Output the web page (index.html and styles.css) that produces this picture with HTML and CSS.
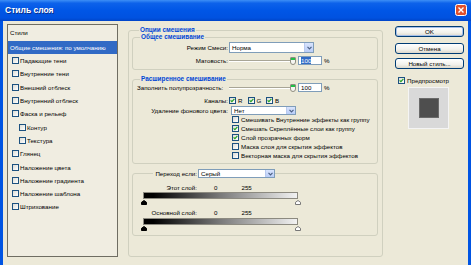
FILE: index.html
```html
<!DOCTYPE html>
<html lang="ru">
<head>
  <meta charset="UTF-8">
  <title>Стиль слоя</title>
  <link rel="stylesheet" href="styles.css">
</head>
<body>
  <div class="window">
    <div class="titlebar">
      <span class="title">Стиль слоя</span>
      <svg class="close" width="12" height="12" viewBox="0 0 12 12">
        <rect x="0.5" y="0.5" width="11" height="11" rx="2" fill="#e0502c" stroke="#fff"/>
        <path d="M3.5 3.5l5 5M8.5 3.5l-5 5" stroke="#fff" stroke-width="1.4"/>
      </svg>
    </div>

    <div class="content">
      <!-- styles list -->
      <div class="styles-list">
        <div class="list-head">Стили</div>
        <div class="item selected">Общие смешения: по умолчанию</div>
        <div class="item"><span class="cb"></span>Падающие тени</div>
        <div class="item"><span class="cb"></span>Внутренние тени</div>
        <div class="item"><span class="cb"></span>Внешний отблеск</div>
        <div class="item"><span class="cb"></span>Внутренний отблеск</div>
        <div class="item"><span class="cb"></span>Фаска и рельеф</div>
        <div class="item sub"><span class="cb"></span>Контур</div>
        <div class="item sub"><span class="cb"></span>Текстура</div>
        <div class="item"><span class="cb"></span>Глянец</div>
        <div class="item"><span class="cb"></span>Наложение цвета</div>
        <div class="item"><span class="cb"></span>Наложение градиента</div>
        <div class="item"><span class="cb"></span>Наложение шаблона</div>
        <div class="item"><span class="cb"></span>Штрихование</div>
      </div>

      <!-- blending options -->
      <fieldset class="options">
        <legend>Опции смешения</legend>

        <fieldset class="group general">
          <legend>Общее смешивание</legend>
          <div class="row first">
            <span class="lbl">Режим Смеси:</span>
            <div class="combo mode">Норма<span class="drop"><svg width="5" height="4" viewBox="0 0 5 4"><path d="M0.5 0.8L2.5 2.8L4.5 0.8" stroke="#4d6185" stroke-width="1.2" fill="none"/></svg></span></div>
          </div>
          <div class="row">
            <span class="lbl">Матовость:</span>
            <div class="slider"><span class="track"></span><span class="thumb"></span></div>
            <span class="num"><span class="hl">100</span></span>
            <span class="pct">%</span>
          </div>
        </fieldset>

        <fieldset class="group advanced">
          <legend>Расширенное смешивание</legend>
          <div class="row">
            <span class="lbl left">Заполнить полупрозрачность:</span>
            <div class="slider"><span class="track"></span><span class="thumb"></span></div>
            <span class="num">100</span>
            <span class="pct">%</span>
          </div>
          <div class="row channels">
            <span class="lbl">Каналы:</span>
            <span class="chan"><span class="cb on"><svg width="5" height="5" viewBox="0 0 5 5"><path d="M0.6 2.4L1.9 3.7L4.4 0.9" stroke="#21a121" stroke-width="1.2" fill="none"/></svg></span>R</span>
            <span class="chan"><span class="cb on"><svg width="5" height="5" viewBox="0 0 5 5"><path d="M0.6 2.4L1.9 3.7L4.4 0.9" stroke="#21a121" stroke-width="1.2" fill="none"/></svg></span>G</span>
            <span class="chan"><span class="cb on"><svg width="5" height="5" viewBox="0 0 5 5"><path d="M0.6 2.4L1.9 3.7L4.4 0.9" stroke="#21a121" stroke-width="1.2" fill="none"/></svg></span>B</span>
          </div>
          <div class="row knockout">
            <span class="lbl">Удаление фонового цвета:</span>
            <div class="combo small">Нет<span class="drop"><svg width="5" height="4" viewBox="0 0 5 4"><path d="M0.5 0.8L2.5 2.8L4.5 0.8" stroke="#4d6185" stroke-width="1.2" fill="none"/></svg></span></div>
          </div>
          <div class="checks">
            <div class="check"><span class="cb"></span>Смешивать Внутренние эффекты как группу</div>
            <div class="check"><span class="cb on"><svg width="5" height="5" viewBox="0 0 5 5"><path d="M0.6 2.4L1.9 3.7L4.4 0.9" stroke="#21a121" stroke-width="1.2" fill="none"/></svg></span>Смешать Скреплённые слои как группу</div>
            <div class="check"><span class="cb on"><svg width="5" height="5" viewBox="0 0 5 5"><path d="M0.6 2.4L1.9 3.7L4.4 0.9" stroke="#21a121" stroke-width="1.2" fill="none"/></svg></span>Слой прозрачных форм</div>
            <div class="check"><span class="cb"></span>Маска слоя для скрытия эффектов</div>
            <div class="check"><span class="cb"></span>Векторная маска для скрытия эффектов</div>
          </div>
        </fieldset>

        <fieldset class="group blendif">
          <legend>
            <span class="if-lbl">Переход если:</span>
            <span class="combo gray">Серый<span class="drop"><svg width="5" height="4" viewBox="0 0 5 4"><path d="M0.5 0.8L2.5 2.8L4.5 0.8" stroke="#4d6185" stroke-width="1.2" fill="none"/></svg></span></span>
          </legend>
          <div class="range-row">
            <span class="rlbl">Этот слой:</span>
            <span class="lo">0</span>
            <span class="hi">255</span>
          </div>
          <div class="ramp"></div>
          <div class="stops">
            <svg width="6" height="5" viewBox="0 0 6 5"><path d="M3 0.5L5.5 2.3V4.5H0.5V2.3Z" fill="#000" stroke="#000"/></svg>
            <svg width="6" height="5" viewBox="0 0 6 5"><path d="M3 0.5L5.5 2.3V4.5H0.5V2.3Z" fill="#fff" stroke="#777"/></svg>
          </div>
          <div class="range-row second">
            <span class="rlbl">Основной слой:</span>
            <span class="lo">0</span>
            <span class="hi">255</span>
          </div>
          <div class="ramp lower"></div>
          <div class="stops">
            <svg width="6" height="5" viewBox="0 0 6 5"><path d="M3 0.5L5.5 2.3V4.5H0.5V2.3Z" fill="#000" stroke="#000"/></svg>
            <svg width="6" height="5" viewBox="0 0 6 5"><path d="M3 0.5L5.5 2.3V4.5H0.5V2.3Z" fill="#fff" stroke="#777"/></svg>
          </div>
        </fieldset>
      </fieldset>

      <!-- buttons and preview -->
      <div class="side">
        <div class="btn default">OK</div>
        <div class="btn cancel">Отмена</div>
        <div class="btn newstyle">Новый стиль...</div>
        <div class="preview-toggle"><span class="cb on"><svg width="5" height="5" viewBox="0 0 5 5"><path d="M0.6 2.4L1.9 3.7L4.4 0.9" stroke="#21a121" stroke-width="1.2" fill="none"/></svg></span>Предпросмотр</div>
        <div class="preview"><div class="swatch"></div></div>
      </div>
    </div>
  </div>
</body>
</html>
```

FILE: styles.css
```css
* {
  box-sizing: border-box;
}

body {
  margin: 0;
  font-family: "Liberation Sans", Arial, sans-serif;
  font-size: 6.2px;
  color: #000;
  background: #fff;
}

.window {
  width: 471px;
  height: 265px;
  background: #0054e3;
  display: flex;
  flex-direction: column;
  overflow: hidden;
}

.titlebar {
  height: 21px;
  flex: none;
  display: flex;
  align-items: center;
  justify-content: space-between;
  padding: 0 4px 1px 5px;
  background: linear-gradient(#3d8ff6 0%, #0d62ea 15%, #0056e6 50%, #0052e0 85%, #0044c8 100%);
}

.title {
  color: #fff;
  font-weight: bold;
  font-size: 8.5px;
  text-shadow: 1px 1px 0 #0a2f8a;
}

.content {
  flex: 1;
  margin: 0 3px;
  background: #ece9d8;
  display: flex;
  align-items: flex-start;
  padding: 3px 0 0 4px;
}

/* left list */
.styles-list {
  width: 111px;
  height: 233px;
  border: 1px solid #6f6d62;
  background: #f0ede1;
  flex: none;
}

.list-head {
  height: 16px;
  line-height: 16px;
  padding-left: 2px;
}

.item {
  height: 13.3px;
  display: flex;
  align-items: center;
  padding-left: 4px;
  white-space: nowrap;
}

.item.selected {
  height: 13px;
  background: #316ac5;
  color: #fff;
  padding-left: 2px;
}

.item.sub {
  padding-left: 11px;
}

.cb {
  width: 7px;
  height: 7px;
  border: 1px solid #1c5180;
  background: linear-gradient(135deg, #dcdcd6, #fff);
  margin-right: 1px;
  flex: none;
  display: inline-flex;
  align-items: center;
  justify-content: center;
}

/* blending options */
fieldset {
  margin: 0;
  padding: 0;
  border: 1px solid #d0d0bf;
  border-radius: 3px;
  min-width: 0;
}

legend {
  padding: 0 1px;
  line-height: 8px;
  color: #0046d5;
  font-weight: bold;
  font-size: 6.4px;
}

.options {
  width: 255px;
  height: 231px;
  margin: 2px 0 0 10px;
  padding: 0 4px 0 3px;
  flex: none;
}

.options > legend {
  margin-left: 7px;
}

.group > legend {
  margin-left: 7px;
}

.general {
  margin-top: -1px;
  padding: 1px 0 4px;
}

.advanced {
  margin-top: 5px;
  padding: 0 0 3px;
}

.row {
  display: flex;
  align-items: center;
  height: 9px;
  white-space: nowrap;
}

.row.first {
  height: 11px;
  margin-bottom: 3px;
}

.lbl {
  width: 95px;
  margin-right: 1px;
  text-align: right;
  flex: none;
}

.lbl.left {
  text-align: left;
  padding-left: 4px;
}

.combo {
  height: 9px;
  border: 1px solid #7f9db9;
  background: #fff;
  display: flex;
  align-items: center;
  justify-content: space-between;
  padding-left: 2px;
  color: #000;
  font-weight: normal;
}

.combo.mode {
  width: 85px;
  height: 11px;
}

.combo.small {
  width: 65px;
  margin-left: 2px;
}

.combo.gray {
  width: 77px;
  margin-left: 1px;
}

.drop {
  width: 9px;
  height: 100%;
  background: linear-gradient(#d9e4fd, #b9cdf8);
  border-left: 1px solid #b8c9ef;
  display: flex;
  align-items: center;
  justify-content: center;
}

.slider {
  width: 67px;
  height: 9px;
  display: flex;
  align-items: center;
  flex: none;
}

.track {
  flex: 1;
  height: 2px;
  border-top: 1px solid #a8a596;
  border-bottom: 1px solid #fff;
}

.thumb {
  width: 6px;
  height: 8px;
  border: 1px solid #8f8d80;
  border-radius: 1px 1px 3px 3px;
  background: linear-gradient(#21c046 0 2px, #f6f6f2 2px);
}

.num {
  width: 24px;
  height: 9px;
  margin-left: 2px;
  border: 1px solid #7f9db9;
  background: #fff;
  padding-left: 2px;
  line-height: 7px;
}

.hl {
  background: #316ac5;
  color: #fff;
}

.pct {
  margin-left: 2px;
}

.channels {
  margin-top: 4px;
  height: 8px;
}

.chan {
  width: 18.5px;
  display: flex;
  align-items: center;
  gap: 1px;
}

.chan:first-of-type {
  margin-left: 3px;
}

.knockout {
  margin-top: 2px;
}

.checks {
  padding-left: 99px;
}

.check {
  height: 9px;
  display: flex;
  align-items: center;
  gap: 1px;
  white-space: nowrap;
}

/* blend if */
.blendif {
  margin-top: 5px;
  padding: 0 0 4px;
}

.blendif > legend {
  margin-left: 20px;
  padding: 0;
  line-height: 9px;
  display: flex;
  align-items: center;
  color: #000;
  font-weight: normal;
  font-size: 6.2px;
  white-space: nowrap;
}

.if-lbl {
  width: 44px;
  text-align: right;
}

.range-row {
  height: 8px;
  margin-top: 5px;
  display: flex;
  align-items: center;
}

.range-row.second {
  margin-top: 3px;
}

.rlbl {
  width: 64px;
  text-align: right;
}

.lo {
  margin-left: 17px;
}

.hi {
  margin-left: 24px;
}

.ramp {
  width: 155px;
  height: 7px;
  margin: 1px 0 0 10px;
  border: 1px solid #8c8a80;
  background: linear-gradient(to right, #000 0%, #000 6%, #7a7a7a 50%, #f2f2f2 100%);
}

.ramp.lower {
  margin-top: 2px;
}

.stops {
  width: 160px;
  height: 6px;
  margin-left: 8px;
  display: flex;
  align-items: flex-end;
  justify-content: space-between;
}

/* side column */
.side {
  width: 69px;
  margin: 2px 0 0 12px;
  flex: none;
}

.btn {
  height: 11px;
  border: 1px solid #003c74;
  border-radius: 3px;
  background: linear-gradient(#fff 0%, #f2f1ec 60%, #dcd8cc 100%);
  text-align: center;
  line-height: 9px;
}

.btn.default {
  box-shadow: inset 0 0 0 1px #a6bfe9;
}

.btn.cancel {
  margin-top: 6px;
}

.btn.newstyle {
  margin-top: 4px;
}

.preview-toggle {
  margin: 8px 0 0 3px;
  display: flex;
  align-items: center;
  gap: 1px;
}

.preview {
  width: 41px;
  height: 42px;
  margin: 3px 0 0 13px;
  background: #d9d9d9;
  border: 1px solid #f4f4f4;
  display: flex;
  align-items: center;
  justify-content: center;
}

.swatch {
  width: 20px;
  height: 20px;
  background: #4e4e4e;
  border: 1px solid #6a6a6a;
}
```
